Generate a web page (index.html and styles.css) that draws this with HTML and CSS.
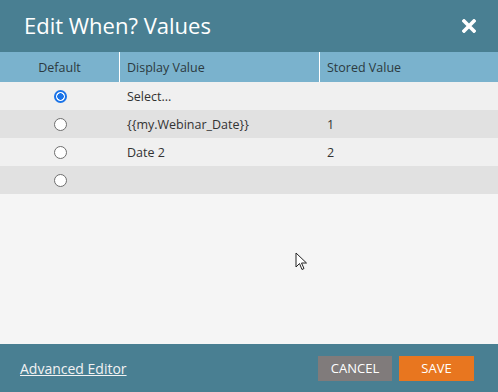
FILE: index.html
```html
<!DOCTYPE html>
<html>
<head>
    <title>Edit When? Values</title>
    <link rel="stylesheet" href="styles.css">
</head>
<body>
    <div class="dialog">
        <div class="title_bar">
            <div class="title">Edit When? Values</div>
            <svg class="close_btn" width="14" height="14" viewBox="0 0 14 14">
                <path d="M2 2 L12 12 M12 2 L2 12" stroke="#fff" stroke-width="3.6" stroke-linecap="square"/>
            </svg>
        </div>

        <div class="grid">
            <div class="row head">
                <div class="cell col_default">Default</div>
                <div class="cell col_display">Display Value</div>
                <div class="cell col_stored">Stored Value</div>
            </div>
            <div class="row">
                <div class="cell col_default"><span class="radio checked"></span></div>
                <div class="cell col_display">Select...</div>
                <div class="cell col_stored"></div>
            </div>
            <div class="row alt">
                <div class="cell col_default"><span class="radio"></span></div>
                <div class="cell col_display">{{my.Webinar_Date}}</div>
                <div class="cell col_stored">1</div>
            </div>
            <div class="row">
                <div class="cell col_default"><span class="radio"></span></div>
                <div class="cell col_display">Date 2</div>
                <div class="cell col_stored">2</div>
            </div>
            <div class="row alt">
                <div class="cell col_default"><span class="radio"></span></div>
                <div class="cell col_display"></div>
                <div class="cell col_stored"></div>
            </div>
        </div>

        <div class="footer">
            <a class="adv_link" href="#">Advanced Editor</a>
            <div class="buttons">
                <button class="btn cancel_btn">CANCEL</button>
                <button class="btn save_btn">SAVE</button>
            </div>
        </div>
    </div>
    <!-- mouse pointer caught in the screenshot -->
    <svg class="pointer" width="14" height="20" viewBox="0 0 14 20">
        <path d="M1 1 L1 15 L4.5 11.5 L7 17.5 L9 16.5 L6.5 11 L11.5 11 Z" fill="#fff" stroke="#222" stroke-width="1"/>
    </svg>
</body>
</html>
```

FILE: styles.css
```css
body {
    margin: 0;
    font-family: 'Open Sans', sans-serif;
    background-color: #f5f5f5;
}

.dialog {
    display: flex;
    flex-direction: column;
    height: 392px;
    width: 498px;
}

.title_bar {
    height: 52px;
    background-color: #497f92;
    display: flex;
    align-items: center;
    justify-content: space-between;
    padding: 0 22px 0 24px;
}

.title {
    color: #fff;
    font-size: 22px;
    margin-top: -2px;
}

.close_btn {
    display: block;
}

.grid {
    flex: 1;
}

.row {
    display: flex;
    height: 28px;
    background-color: #f0f0f0;
    font-size: 12.5px;
    color: #333;
}

.row.alt {
    background-color: #e1e1e1;
}

.row.head {
    height: 30px;
    background-color: #7ab2cd;
    color: #2c3a40;
}

.cell {
    display: flex;
    align-items: center;
    padding-left: 8px;
    box-sizing: border-box;
}

.col_default {
    width: 119px;
    justify-content: center;
    padding-left: 0;
}

.col_display {
    width: 200px;
}

.col_stored {
    flex: 1;
}

.head .col_display,
.head .col_stored {
    border-left: 1px solid #fff;
    padding-left: 7px;
}

.radio {
    width: 13px;
    height: 13px;
    box-sizing: border-box;
    border: 1px solid #6e6e6e;
    border-radius: 50%;
    background-color: #fff;
    margin-left: 2px;
}

.radio.checked {
    border: 2px solid #1a73e8;
    background: radial-gradient(circle, #1a73e8 0, #1a73e8 3px, #fff 3.5px);
}

.footer {
    height: 48px;
    background-color: #497f92;
    display: flex;
    align-items: center;
    justify-content: space-between;
    padding: 0 24px 0 20px;
}

.adv_link {
    color: #f2f2f2;
    font-size: 14px;
    text-decoration: underline;
}

.buttons {
    display: flex;
    gap: 7px;
}

.btn {
    height: 25px;
    border: 0;
    color: #fff;
    font-family: 'Open Sans', sans-serif;
    font-size: 13px;
    padding: 0;
}

.cancel_btn {
    width: 74px;
    background-color: #807b7b;
}

.save_btn {
    width: 75px;
    background-color: #e8761f;
}

.pointer {
    position: absolute;
    left: 295px;
    top: 252px;
}
```
